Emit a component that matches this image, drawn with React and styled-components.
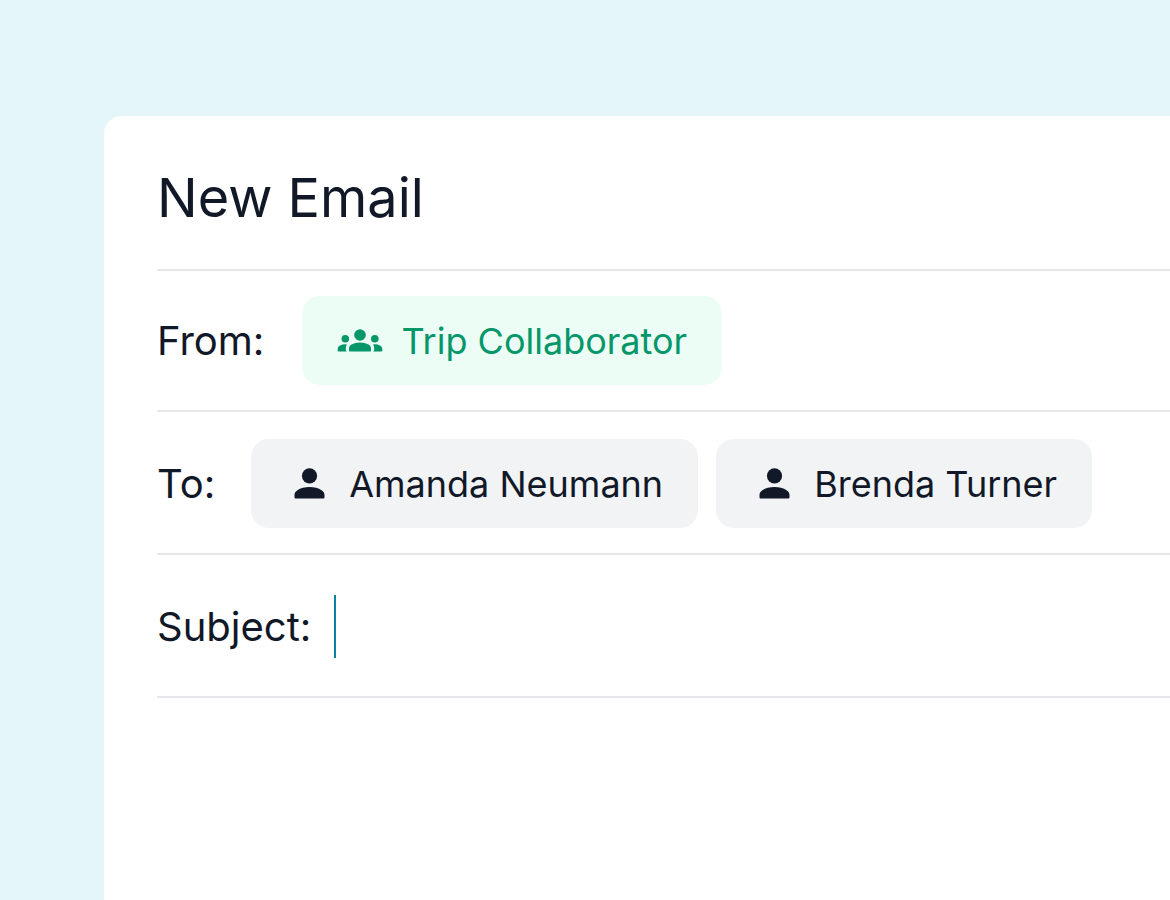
import React, { useState } from 'react';
import styled, { createGlobalStyle } from 'styled-components';

const GlobalStyle = createGlobalStyle`
    * {
        box-sizing: border-box;
    }

    body {
        margin: 0;
        font-family: Inter, 'Liberation Sans', sans-serif;
        color: #111827;
    }
`;

const Page = styled.main`
    display: flex;
    min-height: 100vh;
    padding: 116px 0 0 104px;
    background-color: #e4f6fa;
`;

const Card = styled.form`
    flex: 1;
    min-width: 0;
    padding: 48px 0 0 53px;
    background-color: #fff;
    border-top-left-radius: 18px;
`;

const Title = styled.h1`
    margin: 0;
    height: 107px;
    font-size: 54px;
    font-weight: 400;
    line-height: 68px;
    border-bottom: 2px solid #e5e7eb;
`;

const Row = styled.div`
    display: flex;
    align-items: center;
    gap: ${props => props.gap}px;
    padding: 25px 0;
    border-bottom: 2px solid #e5e7eb;

    & + & {
        padding-top: 27px;
    }
`;

const Label = styled.label`
    font-size: 40px;
    line-height: 89px;
`;

const Chips = styled.div`
    display: flex;
    gap: 18px;
`;

const Chip = styled.button`
    display: flex;
    align-items: center;
    height: 89px;
    gap: ${props => (props.group ? 18 : 24)}px;
    padding: ${props => (props.group ? '0 35px' : '0 35px 0 43px')};
    border: none;
    border-radius: 18px;
    font-family: inherit;
    font-size: 36px;
    white-space: nowrap;
    color: ${props => (props.group ? '#059669' : '#111827')};
    background-color: ${props => (props.group ? '#ebfdf5' : '#f2f3f5')};
    cursor: pointer;
`;

const Field = styled.div`
    display: flex;
    flex: 1;
    align-items: center;
`;

const Caret = styled.span`
    width: 2px;
    height: 63px;
    background-color: #0783a3;
`;

const Input = styled.input`
    flex: 1;
    min-width: 0;
    padding: 0;
    border: none;
    outline: none;
    font-family: inherit;
    font-size: 40px;
    color: inherit;
    background: transparent;
`;

const GroupIcon = () => (
    <svg width='46' height='24' viewBox='0 0 46 24' fill='currentColor' aria-hidden='true'>
        <circle cx='23' cy='6' r='5.8' />
        <circle cx='8.3' cy='9.7' r='3.8' />
        <circle cx='37.8' cy='9.7' r='3.8' />
        <path d='M12 21.4v-1.600c0-1.900.9-3.300 2.500-4.200 2.400-1.300 5.400-2.100 8.500-2.100s6.100.8 8.500 2.100c1.600.9 2.500 2.300 2.500 4.200v1.600c0 .7-.5 1.200-1.200 1.200H13.200c-.7 0-1.200-.5-1.200-1.200Z' />
        <path d='M9.800 22.600H1.800c-.7 0-1.100-.4-1.100-1.100v-1.300c0-1.700.8-3 2.200-3.700 2-1 4.200-1.400 6.900-1.100-.7 1.200-1 2.700-1 4.600 0 1 .2 1.800 1 2.600Z' />
        <path d='M36.200 22.600h8c.7 0 1.100-.4 1.100-1.100v-1.300c0-1.700-.8-3-2.200-3.700-2-1-4.200-1.400-6.900-1.100.7 1.200 1 2.700 1 4.600 0 1-.2 1.800-1 2.600Z' />
    </svg>
);

const PersonIcon = () => (
    <svg width='31' height='31' viewBox='0 0 31 31' fill='currentColor' aria-hidden='true'>
        <circle cx='15.5' cy='7.8' r='7.6' />
        <path d='M.5 27.2c0-2.200.8-3.700 2.600-4.800 3.600-2.200 7.800-3.300 12.400-3.300s8.800 1.100 12.400 3.300c1.800 1.100 2.600 2.600 2.600 4.800v2c0 .8-.5 1.300-1.300 1.300H1.800c-.8 0-1.300-.5-1.300-1.300Z' />
    </svg>
);

const recipients = ['Amanda Neumann', 'Brenda Turner'];

const App = () => {
    const [subject, setSubject] = useState('');

    return (
        <Page>
            <GlobalStyle />
            <Card>
                <Title>New Email</Title>
                <Row gap={38}>
                    <Label htmlFor='from'>From:</Label>
                    <Chip group id='from' type='button'>
                        <GroupIcon />
                        Trip Collaborator
                    </Chip>
                </Row>
                <Row gap={36}>
                    <Label as='span'>To:</Label>
                    <Chips>
                        {recipients.map(name => (
                            <Chip type='button' key={name}>
                                <PersonIcon />
                                {name}
                            </Chip>
                        ))}
                    </Chips>
                </Row>
                <Row gap={23}>
                    <Label htmlFor='subject'>Subject:</Label>
                    <Field>
                        {/* shown until the user starts typing */}
                        {!subject && <Caret />}
                        <Input id='subject' value={subject} onChange={e => setSubject(e.target.value)} />
                    </Field>
                </Row>
            </Card>
        </Page>
    );
};

export default App;
